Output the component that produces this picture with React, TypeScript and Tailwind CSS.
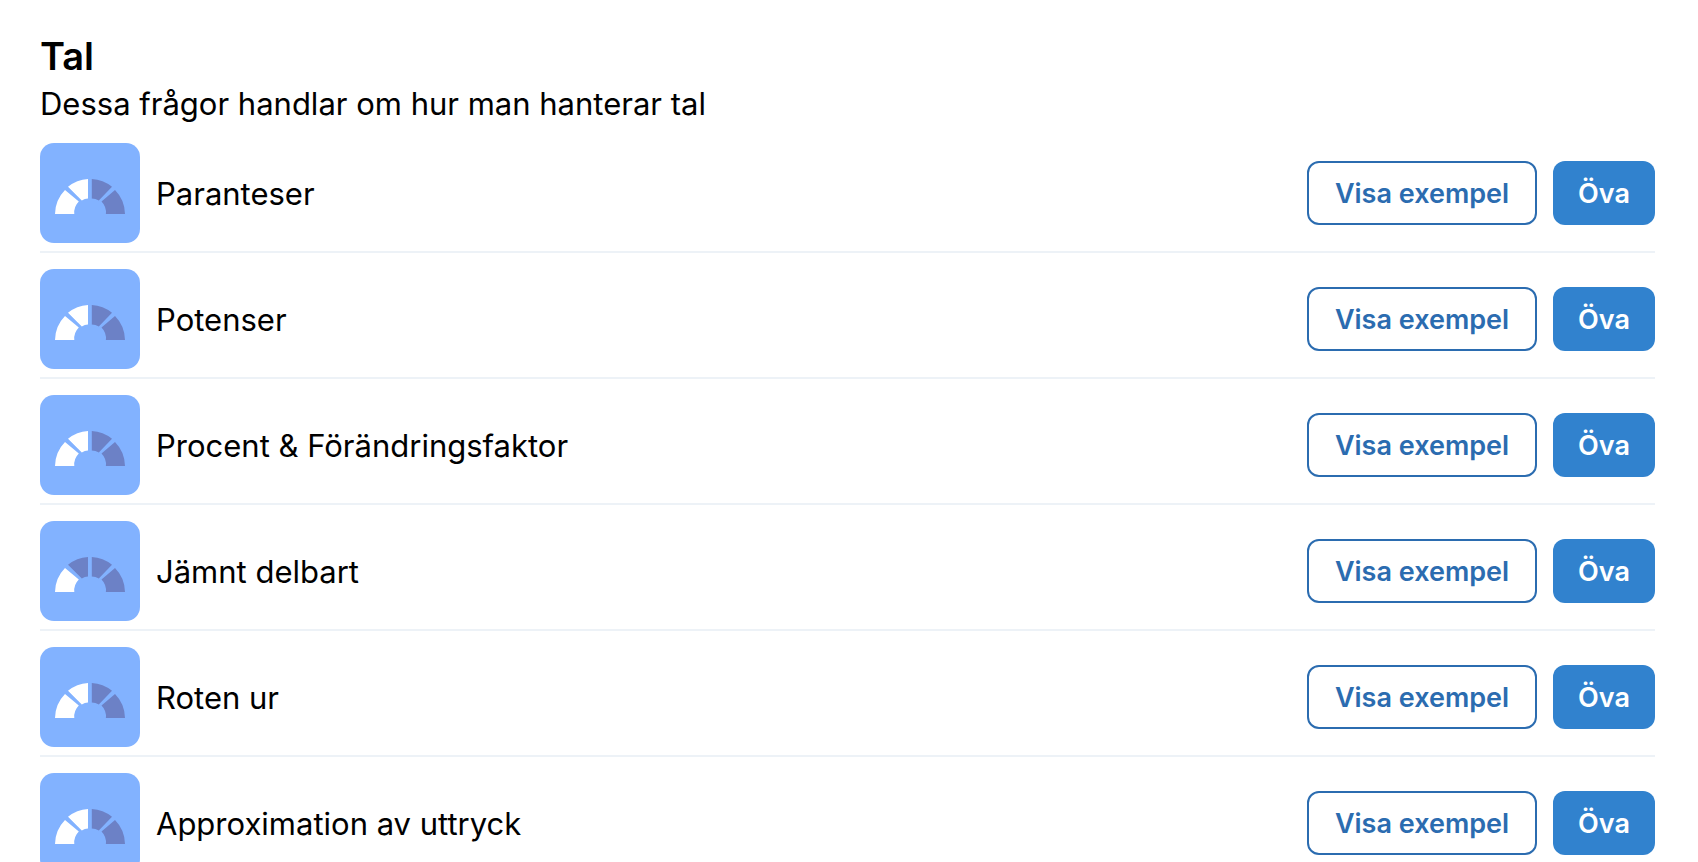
type Topic = { name: string; level: number };

const topics: Topic[] = [
  { name: "Paranteser", level: 2 },
  { name: "Potenser", level: 2 },
  { name: "Procent & Förändringsfaktor", level: 2 },
  { name: "Jämnt delbart", level: 1 },
  { name: "Roten ur", level: 2 },
  { name: "Approximation av uttryck", level: 2 },
];

const segments = [
  "M15 71A35 35 0 0 1 25 47L38.8 58.4A15.7 15.7 0 0 0 34.3 71Z",
  "M28 43.8A35 35 0 0 1 48 36V55.5A15.7 15.7 0 0 0 41.8 57.4Z",
  "M51.8 36A35 35 0 0 1 72 43.8L58.8 57.4A15.7 15.7 0 0 0 51.8 55.5Z",
  "M75 47A35 35 0 0 1 85 71H65.9A15.7 15.7 0 0 0 61.5 58.4Z",
];

function Gauge({ level }: { level: number }) {
  return (
    <div className="size-[100px] shrink-0 overflow-hidden rounded-[14px] bg-[#82b2ff]">
      <svg viewBox="0 0 100 100" className="size-full" aria-hidden="true">
        {segments.map((d, i) => (
          <path key={d} d={d} fill={i < level ? "#ffffff" : "#6c81c6"} />
        ))}
      </svg>
    </div>
  );
}

function TopicRow({ name, level }: Topic) {
  return (
    <li className="flex items-center gap-4 border-b-2 border-[#edf2f7] pb-2">
      <Gauge level={level} />
      <span className="grow pt-0.5 text-[31px] leading-[48px]">{name}</span>
      <button
        type="button"
        className="h-16 shrink-0 rounded-xl border-2 border-[#2b6cb0] px-[26px] pt-0.5 text-[27px] leading-8 font-semibold text-[#2b6cb0]"
      >
        Visa exempel
      </button>
      <button
        type="button"
        className="h-16 shrink-0 rounded-xl bg-[#3182ce] px-[25px] pt-0.5 text-[27px] leading-8 font-semibold text-white"
      >
        Öva
      </button>
    </li>
  );
}

export default function App() {
  return (
    <main className="h-screen overflow-hidden bg-white pt-8 pr-[43px] pl-10 font-['Inter',sans-serif] text-black">
      <h1 className="text-[38px] leading-[48px] font-semibold">Tal</h1>
      <p className="text-[31px] leading-[48px]">Dessa frågor handlar om hur man hanterar tal</p>
      <ul className="mt-[15px] flex flex-col gap-4">
        {topics.map((topic) => (
          <TopicRow key={topic.name} {...topic} />
        ))}
      </ul>
    </main>
  );
}
